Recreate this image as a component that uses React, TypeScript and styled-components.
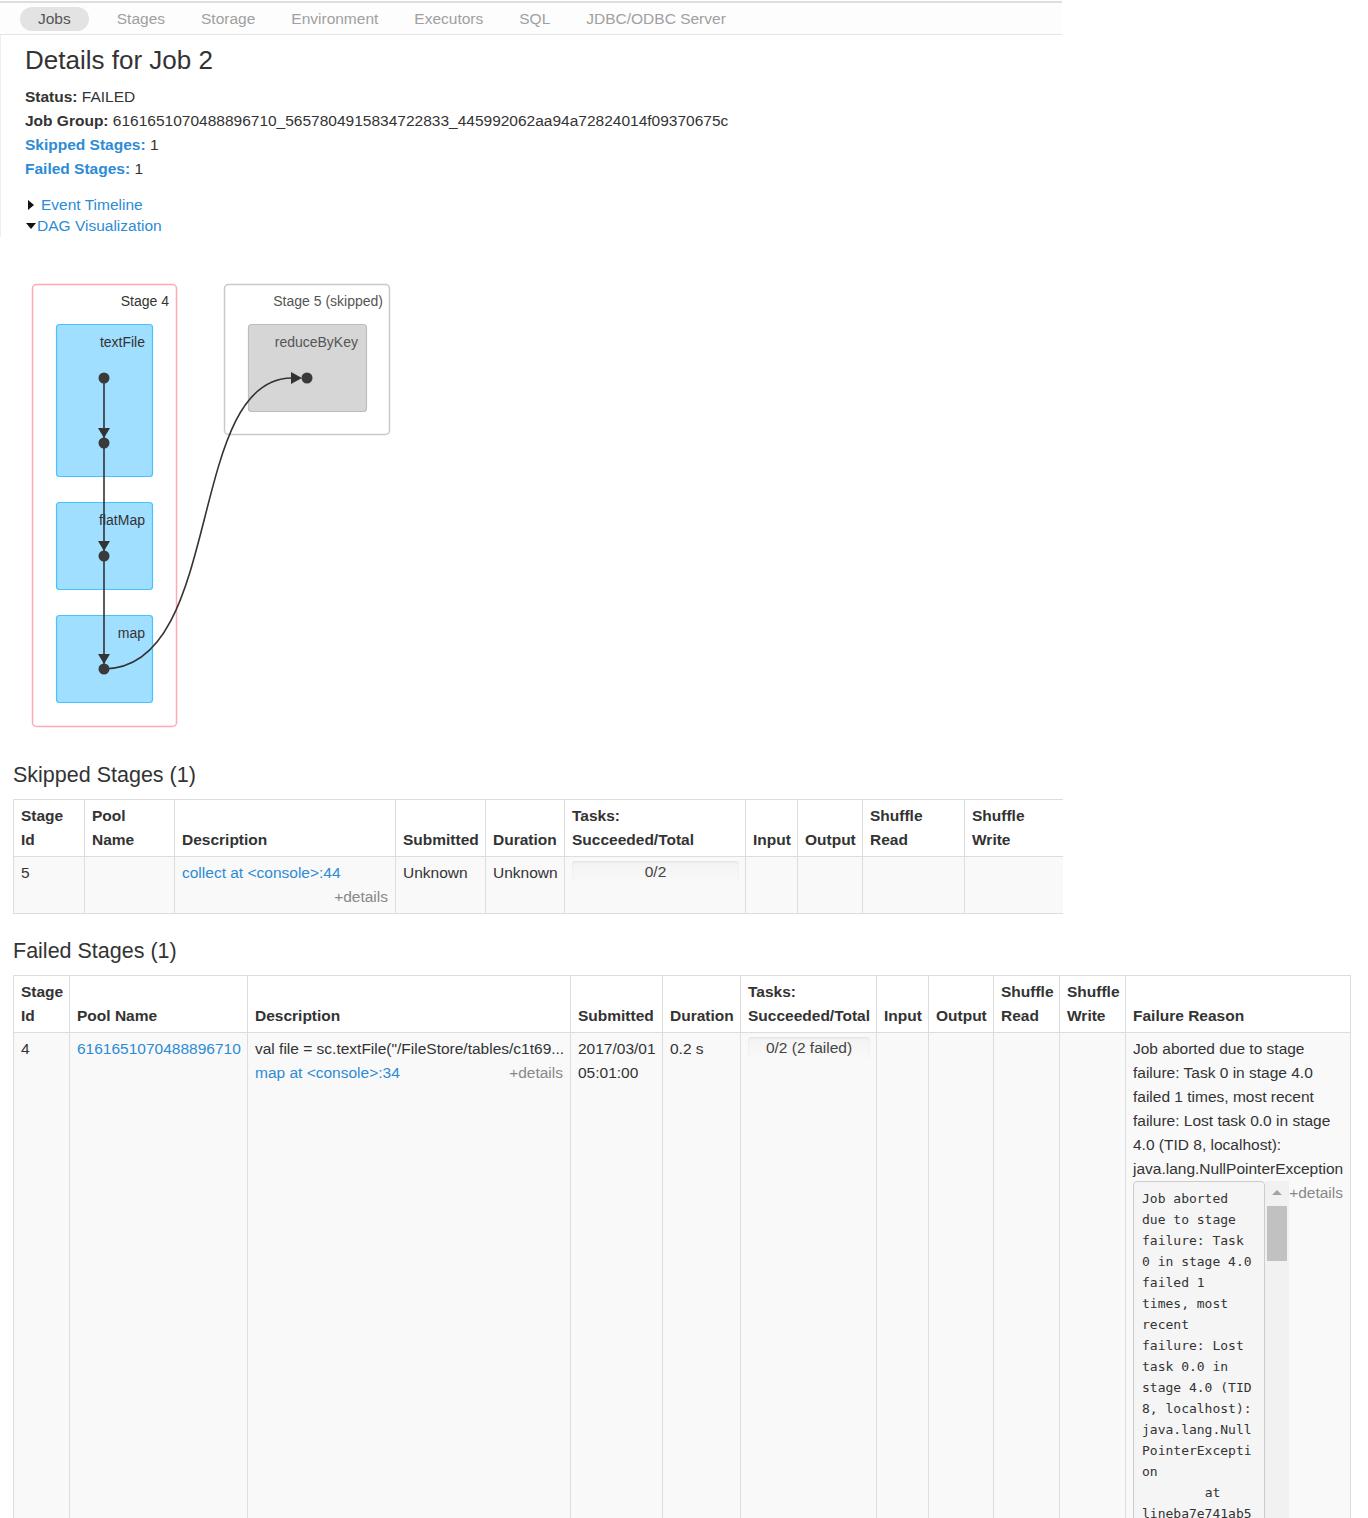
import React from "react";
import styled, { createGlobalStyle } from "styled-components";

const GlobalStyle = createGlobalStyle`
  html, body { margin: 0; padding: 0; background: #fff; }
  body {
    font-family: "Liberation Sans", Arial, Helvetica, sans-serif;
    font-size: 15.5px;
    line-height: 24px;
    color: #333;
  }
  a { color: #2d8bd6; text-decoration: none; }
`;

const Page = styled.div`
  width: 1368px;
  padding-top: 1px;
`;

const NavBar = styled.ul`
  display: flex;
  align-items: center;
  width: 1042px;
  height: 31px;
  margin: 0;
  padding: 0 0 0 20px;
  list-style: none;
  border-top: 2px solid #dedede;
  border-bottom: 1px solid #e6e6e6;
  background: #fdfdfd;
`;

const Tab = styled.li<{ $active?: boolean }>`
  padding: 0 18px;
  line-height: 24px;
  border-radius: 12px;
  color: ${(p) => (p.$active ? "#555" : "#a0a0a0")};
  background: ${(p) => (p.$active ? "#e3e3e3" : "transparent")};
  margin-right: ${(p) => (p.$active ? "10px" : "0")};
`;

const Header = styled.div`
  width: 1062px;
  box-sizing: border-box;
  padding: 10px 0 1px 24px;
  border-left: 1px solid #eee;
`;

const Title = styled.h3`
  margin: 0 0 10px;
  font-size: 26px;
  line-height: 30px;
  font-weight: normal;
  color: #333;
`;

const Summary = styled.ul`
  margin: 0;
  padding: 0;
  list-style: none;
  strong { font-weight: bold; }
  a { font-weight: bold; }
`;

const Toggles = styled.div`
  margin-top: 13px;
  line-height: 21px;
`;

const Toggle = styled.div`
  display: flex;
  align-items: center;
  color: #2d8bd6;
`;

const ArrowRight = styled.span`
  width: 0;
  height: 0;
  margin: 0 7px 0 3px;
  border-left: 6px solid #111;
  border-top: 5px solid transparent;
  border-bottom: 5px solid transparent;
`;

const ArrowDown = styled.span`
  width: 0;
  height: 0;
  margin: 0 1px 0 1px;
  border-top: 6px solid #111;
  border-left: 5px solid transparent;
  border-right: 5px solid transparent;
`;

const Dag = styled.svg`
  display: block;
  margin-top: 3px;
  font-family: "Liberation Sans", Arial, sans-serif;
`;

const SectionTitle = styled.h4<{ $top: number; $bottom: number }>`
  margin: ${(p) => p.$top}px 0 ${(p) => p.$bottom}px 13px;
  font-size: 21.5px;
  line-height: 26px;
  font-weight: normal;
  color: #333;
`;

const Table = styled.table<{ $width: number }>`
  width: ${(p) => p.$width}px;
  margin-left: 13px;
  border-collapse: collapse;
  table-layout: fixed;
`;

const Th = styled.th<{ $last?: boolean }>`
  padding: 4px 7px;
  text-align: left;
  vertical-align: bottom;
  font-weight: bold;
  white-space: nowrap;
  border-top: 1px solid #ddd;
  border-bottom: 1px solid #ddd;
  border-left: 1px solid #ddd;
  border-right: ${(p) => (p.$last ? "1px solid #ddd" : "none")};
`;

const Td = styled.td<{ $last?: boolean }>`
  padding: 4px 7px;
  vertical-align: top;
  background: #f9f9f9;
  border-bottom: 1px solid #ddd;
  border-left: 1px solid #ddd;
  border-right: ${(p) => (p.$last ? "1px solid #ddd" : "none")};
`;

const Line = styled.div`
  white-space: nowrap;
`;

const DescLine = styled.div`
  display: flex;
  justify-content: space-between;
  white-space: nowrap;
`;

const MoreDetails = styled.span`
  color: #888;
`;

const MoreBlock = styled.div`
  color: #888;
  text-align: right;
`;

const Progress = styled.div`
  height: 22px;
  line-height: 22px;
  margin-right: -1px;
  border-radius: 4px;
  text-align: center;
  color: #444;
  background: linear-gradient(to bottom, #f3f3f3, #f9f9f9);
  box-shadow: inset 0 1px 2px rgba(0, 0, 0, 0.08);
`;

const FloatDetails = styled.span`
  float: right;
  color: #888;
`;

const Stacktrace = styled.div`
  display: flex;
  height: 400px;
  overflow: hidden;
`;

const Pre = styled.pre`
  flex: 1;
  min-width: 0;
  margin: 0;
  padding: 6px 8px;
  overflow: hidden;
  border: 1px solid #ccc;
  border-radius: 4px;
  background: #f5f5f5;
  font-family: "DejaVu Sans Mono", "Liberation Mono", monospace;
  font-size: 13px;
  line-height: 21px;
  color: #333;
  white-space: pre-wrap;
  overflow-wrap: break-word;
`;

const Rail = styled.div`
  display: flex;
  flex-direction: column;
  align-items: center;
  width: 24px;
  flex-shrink: 0;
  background: #f1f1f1;
`;

const RailButton = styled.div`
  display: flex;
  align-items: center;
  justify-content: center;
  width: 24px;
  height: 25px;
  &::before {
    content: "";
    width: 0;
    height: 0;
    margin-top: -2px;
    border-bottom: 5px solid #a3a3a3;
    border-left: 5px solid transparent;
    border-right: 5px solid transparent;
  }
`;

const Thumb = styled.div`
  width: 20px;
  height: 55px;
  background: #c1c1c1;
`;

const summary =
  "Job aborted due to stage failure: Task 0 in stage 4.0 failed 1 times, most recent failure: Lost task 0.0 in stage 4.0 (TID 8, localhost): java.lang.NullPointerException";

const frames = [
  "lineba7e741ab58f4d9eb51b9aba1eaaf1ed3429.$read$$iw$$iw$$iw$$iw$$iw$$iw$$iw$$iw$$anonfun$1.apply(<console>:34)",
  "lineba7e741ab58f4d9eb51b9aba1eaaf1ed3429.$read$$iw$$iw$$iw$$iw$$iw$$iw$$iw$$iw$$anonfun$1.apply(<console>:34)",
  "scala.collection.Iterator$$anon$11.next(Iterator.scala:409)",
  "scala.collection.Iterator$$anon$13.hasNext(Iterator.scala:462)",
  "org.apache.spark.util.collection.ExternalSorter.insertAll(ExternalSorter.scala:192)",
  "org.apache.spark.shuffle.sort.SortShuffleWriter.write(SortShuffleWriter.scala:63)",
  "org.apache.spark.scheduler.ShuffleMapTask.runTask(ShuffleMapTask.scala:96)",
  "org.apache.spark.scheduler.Task.run(Task.scala:99)",
  "org.apache.spark.executor.Executor$TaskRunner.run(Executor.scala:282)",
  "java.lang.Thread.run(Thread.java:745)",
];

const stacktrace = [summary, ...frames.map((f) => "\tat " + f)].join("\n");

const skippedCols = [71, 90, 221, 90, 79, 181, 52, 65, 102, 98];
const failedCols = [56, 178, 323, 92, 78, 136, 52, 65, 66, 66, 225];

const skippedHeads = [
  ["Stage", "Id"],
  ["Pool", "Name"],
  ["Description"],
  ["Submitted"],
  ["Duration"],
  ["Tasks:", "Succeeded/Total"],
  ["Input"],
  ["Output"],
  ["Shuffle", "Read"],
  ["Shuffle", "Write"],
];

const failedHeads = [
  ["Stage", "Id"],
  ["Pool Name"],
  ["Description"],
  ["Submitted"],
  ["Duration"],
  ["Tasks:", "Succeeded/Total"],
  ["Input"],
  ["Output"],
  ["Shuffle", "Read"],
  ["Shuffle", "Write"],
  ["Failure Reason"],
];

const HeadRow = ({ heads, closed }: { heads: string[][]; closed?: boolean }) => (
  <tr>
    {heads.map((lines, i) => (
      <Th key={i} $last={closed && i === heads.length - 1}>
        {lines.map((l, j) => (
          <React.Fragment key={j}>
            {j > 0 && <br />}
            {l}
          </React.Fragment>
        ))}
      </Th>
    ))}
  </tr>
);

const Cols = ({ widths }: { widths: number[] }) => (
  <colgroup>
    {widths.map((w, i) => (
      <col key={i} style={{ width: w }} />
    ))}
  </colgroup>
);

const DagGraph = () => (
  <Dag width={400} height={500} viewBox="0 240 400 500">
    <rect x={32.5} y={284.5} width={144} height={442} rx={4} fill="#fff" stroke="#ffa8b8" strokeWidth={1.5} />
    <text x={169} y={306} textAnchor="end" fontSize={14} fill="#333">Stage 4</text>

    <rect x={224.5} y={284.5} width={165} height={150} rx={4} fill="#fff" stroke="#c9c9c9" strokeWidth={1.5} />
    <text x={383} y={306} textAnchor="end" fontSize={14} fill="#555">Stage 5 (skipped)</text>

    <rect x={56.5} y={324.5} width={96} height={152} rx={3} fill="#a0dfff" stroke="#46c2ff" strokeWidth={1.2} />
    <text x={145} y={347} textAnchor="end" fontSize={14} fill="#333">textFile</text>
    <rect x={56.5} y={502.5} width={96} height={87} rx={3} fill="#a0dfff" stroke="#46c2ff" strokeWidth={1.2} />
    <text x={145} y={525} textAnchor="end" fontSize={14} fill="#333">flatMap</text>
    <rect x={56.5} y={615.5} width={96} height={87} rx={3} fill="#a0dfff" stroke="#46c2ff" strokeWidth={1.2} />
    <text x={145} y={638} textAnchor="end" fontSize={14} fill="#333">map</text>

    <rect x={248.5} y={324.5} width={118} height={87} rx={3} fill="#d6d6d6" stroke="#bdbdbd" strokeWidth={1.2} />
    <text x={358} y={347} textAnchor="end" fontSize={14} fill="#555">reduceByKey</text>

    <path d="M104 378 L104 669" stroke="#333" strokeWidth={1.6} fill="none" />
    <path d="M104 669 C 225 669, 185 378, 292 378" stroke="#333" strokeWidth={1.6} fill="none" />

    <polygon points="98,428 110,428 104,438" fill="#333" />
    <polygon points="98,541 110,541 104,551" fill="#333" />
    <polygon points="98,654 110,654 104,664" fill="#333" />
    <polygon points="291,372 291,384 302,378" fill="#333" />

    {[
      [104, 378],
      [104, 443],
      [104, 556],
      [104, 669],
      [307, 378],
    ].map(([cx, cy], i) => (
      <circle key={i} cx={cx} cy={cy} r={5.5} fill="#3a3a3a" />
    ))}
  </Dag>
);

export default function App() {
  return (
    <Page>
      <GlobalStyle />
      <NavBar>
        <Tab $active>Jobs</Tab>
        <Tab>Stages</Tab>
        <Tab>Storage</Tab>
        <Tab>Environment</Tab>
        <Tab>Executors</Tab>
        <Tab>SQL</Tab>
        <Tab>JDBC/ODBC Server</Tab>
      </NavBar>

      <Header>
        <Title>Details for Job 2</Title>
        <Summary>
          <li>
            <strong>Status:</strong> FAILED
          </li>
          <li>
            <strong>Job Group:</strong> 6161651070488896710_5657804915834722833_445992062aa94a72824014f09370675c
          </li>
          <li>
            <a href="#skipped">Skipped Stages:</a> 1
          </li>
          <li>
            <a href="#failed">Failed Stages:</a> 1
          </li>
        </Summary>
        <Toggles>
          <Toggle>
            <ArrowRight />
            Event Timeline
          </Toggle>
          <Toggle>
            <ArrowDown />
            DAG Visualization
          </Toggle>
        </Toggles>
      </Header>

      <DagGraph />

      <SectionTitle $top={22} $bottom={11} id="skipped">Skipped Stages (1)</SectionTitle>
      <Table $width={1049}>
        <Cols widths={skippedCols} />
        <thead>
          <HeadRow heads={skippedHeads} />
        </thead>
        <tbody>
          <tr>
            <Td>5</Td>
            <Td />
            <Td>
              <Line>
                <a href="#">collect at &lt;console&gt;:44</a>
              </Line>
              <MoreBlock>+details</MoreBlock>
            </Td>
            <Td>Unknown</Td>
            <Td>Unknown</Td>
            <Td>
              <Progress>0/2</Progress>
            </Td>
            <Td />
            <Td />
            <Td />
            <Td />
          </tr>
        </tbody>
      </Table>

      <SectionTitle $top={24} $bottom={11} id="failed">Failed Stages (1)</SectionTitle>
      <Table $width={1337}>
        <Cols widths={failedCols} />
        <thead>
          <HeadRow heads={failedHeads} closed />
        </thead>
        <tbody>
          <tr>
            <Td>4</Td>
            <Td>
              <a href="#">6161651070488896710</a>
            </Td>
            <Td>
              <Line>val file = sc.textFile("/FileStore/tables/c1t69...</Line>
              <DescLine>
                <a href="#">map at &lt;console&gt;:34</a>
                <MoreDetails>+details</MoreDetails>
              </DescLine>
            </Td>
            <Td>
              2017/03/01
              <br />
              05:01:00
            </Td>
            <Td>0.2 s</Td>
            <Td>
              <Progress>0/2 (2 failed)</Progress>
            </Td>
            <Td />
            <Td />
            <Td />
            <Td />
            <Td $last>
              {summary}
              <FloatDetails>+details</FloatDetails>
              <Stacktrace>
                <Pre>{stacktrace}</Pre>
                <Rail>
                  <RailButton />
                  <Thumb />
                </Rail>
              </Stacktrace>
            </Td>
          </tr>
        </tbody>
      </Table>
    </Page>
  );
}
